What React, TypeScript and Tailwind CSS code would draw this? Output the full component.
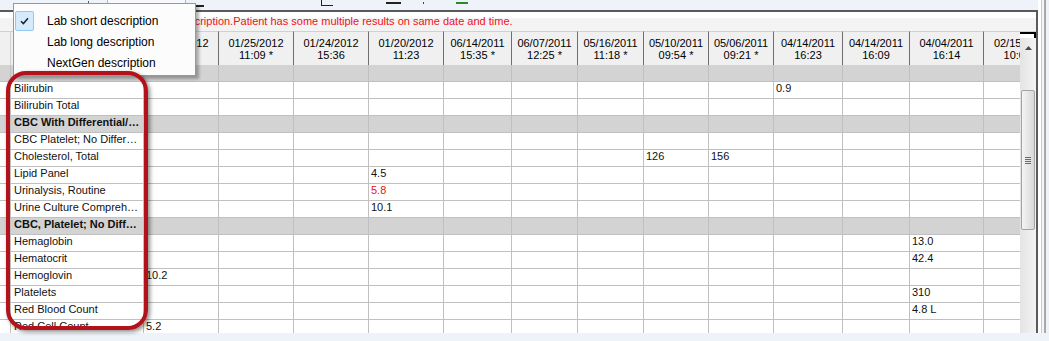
import { Fragment } from 'react'

const cols = [
  { d: '02/01/2012', t: '10:45' },
  { d: '01/25/2012', t: '11:09 *' },
  { d: '01/24/2012', t: '15:36' },
  { d: '01/20/2012', t: '11:23' },
  { d: '06/14/2011', t: '15:35 *' },
  { d: '06/07/2011', t: '12:25 *' },
  { d: '05/16/2011', t: '11:18 *' },
  { d: '05/10/2011', t: '09:54 *' },
  { d: '05/06/2011', t: '09:21 *' },
  { d: '04/14/2011', t: '16:23' },
  { d: '04/14/2011', t: '16:09' },
  { d: '04/04/2011', t: '16:14' },
  { d: '02/15/2011', t: '10:02 *' },
]

type Row = { label: string; group?: boolean; vals?: Record<number, string>; red?: number }

const rows: Row[] = [
  { label: 'Liver Function', group: true },
  { label: 'Bilirubin', vals: { 9: '0.9' } },
  { label: 'Bilirubin Total' },
  { label: 'CBC With Differential/Platelet', group: true },
  { label: 'CBC Platelet; No Differential' },
  { label: 'Cholesterol, Total', vals: { 7: '126', 8: '156' } },
  { label: 'Lipid Panel', vals: { 3: '4.5' } },
  { label: 'Urinalysis, Routine', vals: { 3: '5.8' }, red: 3 },
  { label: 'Urine Culture Comprehensive', vals: { 3: '10.1' } },
  { label: 'CBC, Platelet; No Differential', group: true },
  { label: 'Hemaglobin', vals: { 11: '13.0' } },
  { label: 'Hematocrit', vals: { 11: '42.4' } },
  { label: 'Hemoglovin', vals: { 0: '10.2' } },
  { label: 'Platelets', vals: { 11: '310' } },
  { label: 'Red Blood Count', vals: { 11: '4.8 L' } },
  { label: 'Red Cell Count', vals: { 0: '5.2' } },
]

const menuItems = ['Lab short description', 'Lab long description', 'NextGen description']

export default function App() {
  return (
    <div className="relative flex h-[341px] w-[1049px] flex-col overflow-hidden bg-[#eef2f9] font-['Liberation_Sans',Arial,sans-serif] text-black">
      <div className="flex h-[333px]">
        <div className="flex w-[1038px] flex-col">
          {/* toolbar remnants */}
          <div className="flex h-[10px] items-start">
            <span className="ml-[88px] mt-[1px] h-[3px] w-[1px] bg-[#555]" />
            <div className="ml-[18px] h-[8px] w-[79px] border-x border-[#b8b8b8] bg-[#f7f9fc]" />
            <span className="ml-[5px] mt-[5px] h-[2px] w-[13px] bg-[#222]" />
            <span className="ml-[117px] h-[6px] w-[12px] border-b border-l border-[#222]" />
            <span className="ml-[53px] mt-[2px] h-[2px] w-[15px] bg-[#222]" />
            <span className="ml-[22px] mt-[2px] h-[2px] w-[1px] bg-[#444]" />
            <span className="ml-[32px] mt-[2px] h-[2px] w-[12px] bg-[#2a8a2a]" />
          </div>

          {/* grid frame */}
          <div className="flex flex-1 flex-col overflow-hidden border-t-2 border-r-2 border-[#5a5a5a] bg-white">
            <div className="h-[19px] bg-linear-to-b from-white from-30% to-[#f3f3f3] to-35% pl-[128px] text-[11px] leading-[19px] whitespace-nowrap text-[#f01020]">
              Lab short description.Patient has some multiple results on same date and time.
            </div>
            <div className="flex flex-1 overflow-hidden">
              <div className="w-[1020px] overflow-hidden">
                <div className="grid grid-cols-[11px_133px_75px_75px_75px_75px_68px_66px_66px_65px_65px_69px_67px_74px_75px] text-[11px]">
                  <div className="h-[34px] border-t border-r border-[#d0d0d0] bg-[#f0f0f0]" />
                  <div className="h-[34px] border-t border-r border-t-[#d0d0d0] border-r-[#6e6e6e] bg-[#f0f0f0]" />
                  {cols.map((c, i) => (
                    <div
                      key={i}
                      className="flex h-[34px] flex-col items-center justify-center border-t border-r border-t-[#d0d0d0] border-r-[#6e6e6e] bg-[#f0f0f0] leading-[12px] whitespace-nowrap"
                    >
                      <span>{c.d}</span>
                      <span>{c.t}</span>
                    </div>
                  ))}
                  {rows.map((r, ri) => (
                    <Fragment key={ri}>
                      <div className={`h-[17px] border-r border-b border-[#c0c0c0] ${r.group ? 'bg-[#d3d3d3]' : 'bg-white'}`} />
                      <div
                        className={`h-[17px] truncate border-r border-b border-[#c0c0c0] pl-[3px] pr-[2px] leading-[13px] text-[#111] ${r.group ? 'bg-[#d3d3d3] font-bold' : 'bg-white'}`}
                      >
                        {r.label}
                      </div>
                      {cols.map((_, ci) => (
                        <div
                          key={ci}
                          className={`h-[17px] overflow-hidden border-r border-b border-[#c0c0c0] pl-[2px] leading-[13px] whitespace-nowrap ${r.group ? 'bg-[#d3d3d3]' : 'bg-white'} ${r.red === ci ? 'text-[#f01020]' : 'text-[#111]'}`}
                        >
                          {r.vals?.[ci] ?? ''}
                        </div>
                      ))}
                    </Fragment>
                  ))}
                </div>
              </div>

              {/* vertical scrollbar */}
              <div className="flex w-[16px] flex-col">
                <div className="border-t border-[#d0d0d0]">
                  <div className="h-[6px] border-t-2 border-r-2 border-black bg-white" />
                </div>
                <div className="flex flex-1 flex-col bg-linear-to-r from-[#e4e4e4] to-[#f3f3f3]">
                  <div className="flex h-[20px] items-center justify-center">
                    <svg width="7" height="4" viewBox="0 0 7 4">
                      <path d="M0 4 L3.5 0 L7 4 Z" fill="#4a4a4a" />
                    </svg>
                  </div>
                  <div className="mt-[32px] ml-[1px] flex h-[140px] w-[14px] items-center justify-center rounded-[2px] border border-[#a3a3a3] bg-linear-to-r from-[#f4f4f4] to-[#d8d8d8]">
                    <div className="flex flex-col gap-[1px]">
                      <span className="h-[1px] w-[6px] bg-[#6a6a6a]" />
                      <span className="h-[1px] w-[6px] bg-[#6a6a6a]" />
                      <span className="h-[1px] w-[6px] bg-[#6a6a6a]" />
                      <span className="h-[1px] w-[6px] bg-[#6a6a6a]" />
                    </div>
                  </div>
                </div>
              </div>
            </div>
          </div>
        </div>

        {/* window edge */}
        <div className="flex w-[11px]">
          <div className="w-[3px] bg-white" />
          <div className="w-[1px] bg-[#c8c8c8]" />
          <div className="w-[2px] bg-[#f4f6fa]" />
          <div className="w-[2px] bg-[#a8a8a8]" />
        </div>
      </div>
      <div className="flex-1" />

      {/* context menu */}
      <div className="absolute top-[3px] left-[13px] h-[73px] w-[183px] border border-[#979797] bg-[#fcfcfc] pt-[6px] pl-[1px] shadow-[3px_3px_3px_rgba(0,0,0,0.3)]">
        {menuItems.map((m, i) => (
          <div key={m} className="flex h-[21px] items-center text-[12px]">
            {i === 0 ? (
              <div className="flex h-[20px] w-[19px] items-center justify-center rounded-[2px] border border-[#90c8f6] bg-[#d5eafa]">
                <svg width="9" height="8" viewBox="0 0 9 8">
                  <path d="M1 4.2 L3.4 6.6 L8 1.2" fill="none" stroke="#222" strokeWidth="1.5" />
                </svg>
              </div>
            ) : (
              <div className="w-[19px]" />
            )}
            <span className="ml-[13px]">{m}</span>
          </div>
        ))}
      </div>

      {/* red annotation */}
      <div className="absolute top-[71px] left-[6px] h-[259px] w-[142px] rounded-[20px] border-[4px] border-[#b3121a] shadow-[2px_2px_4px_rgba(0,0,0,0.45)]" />
    </div>
  )
}
